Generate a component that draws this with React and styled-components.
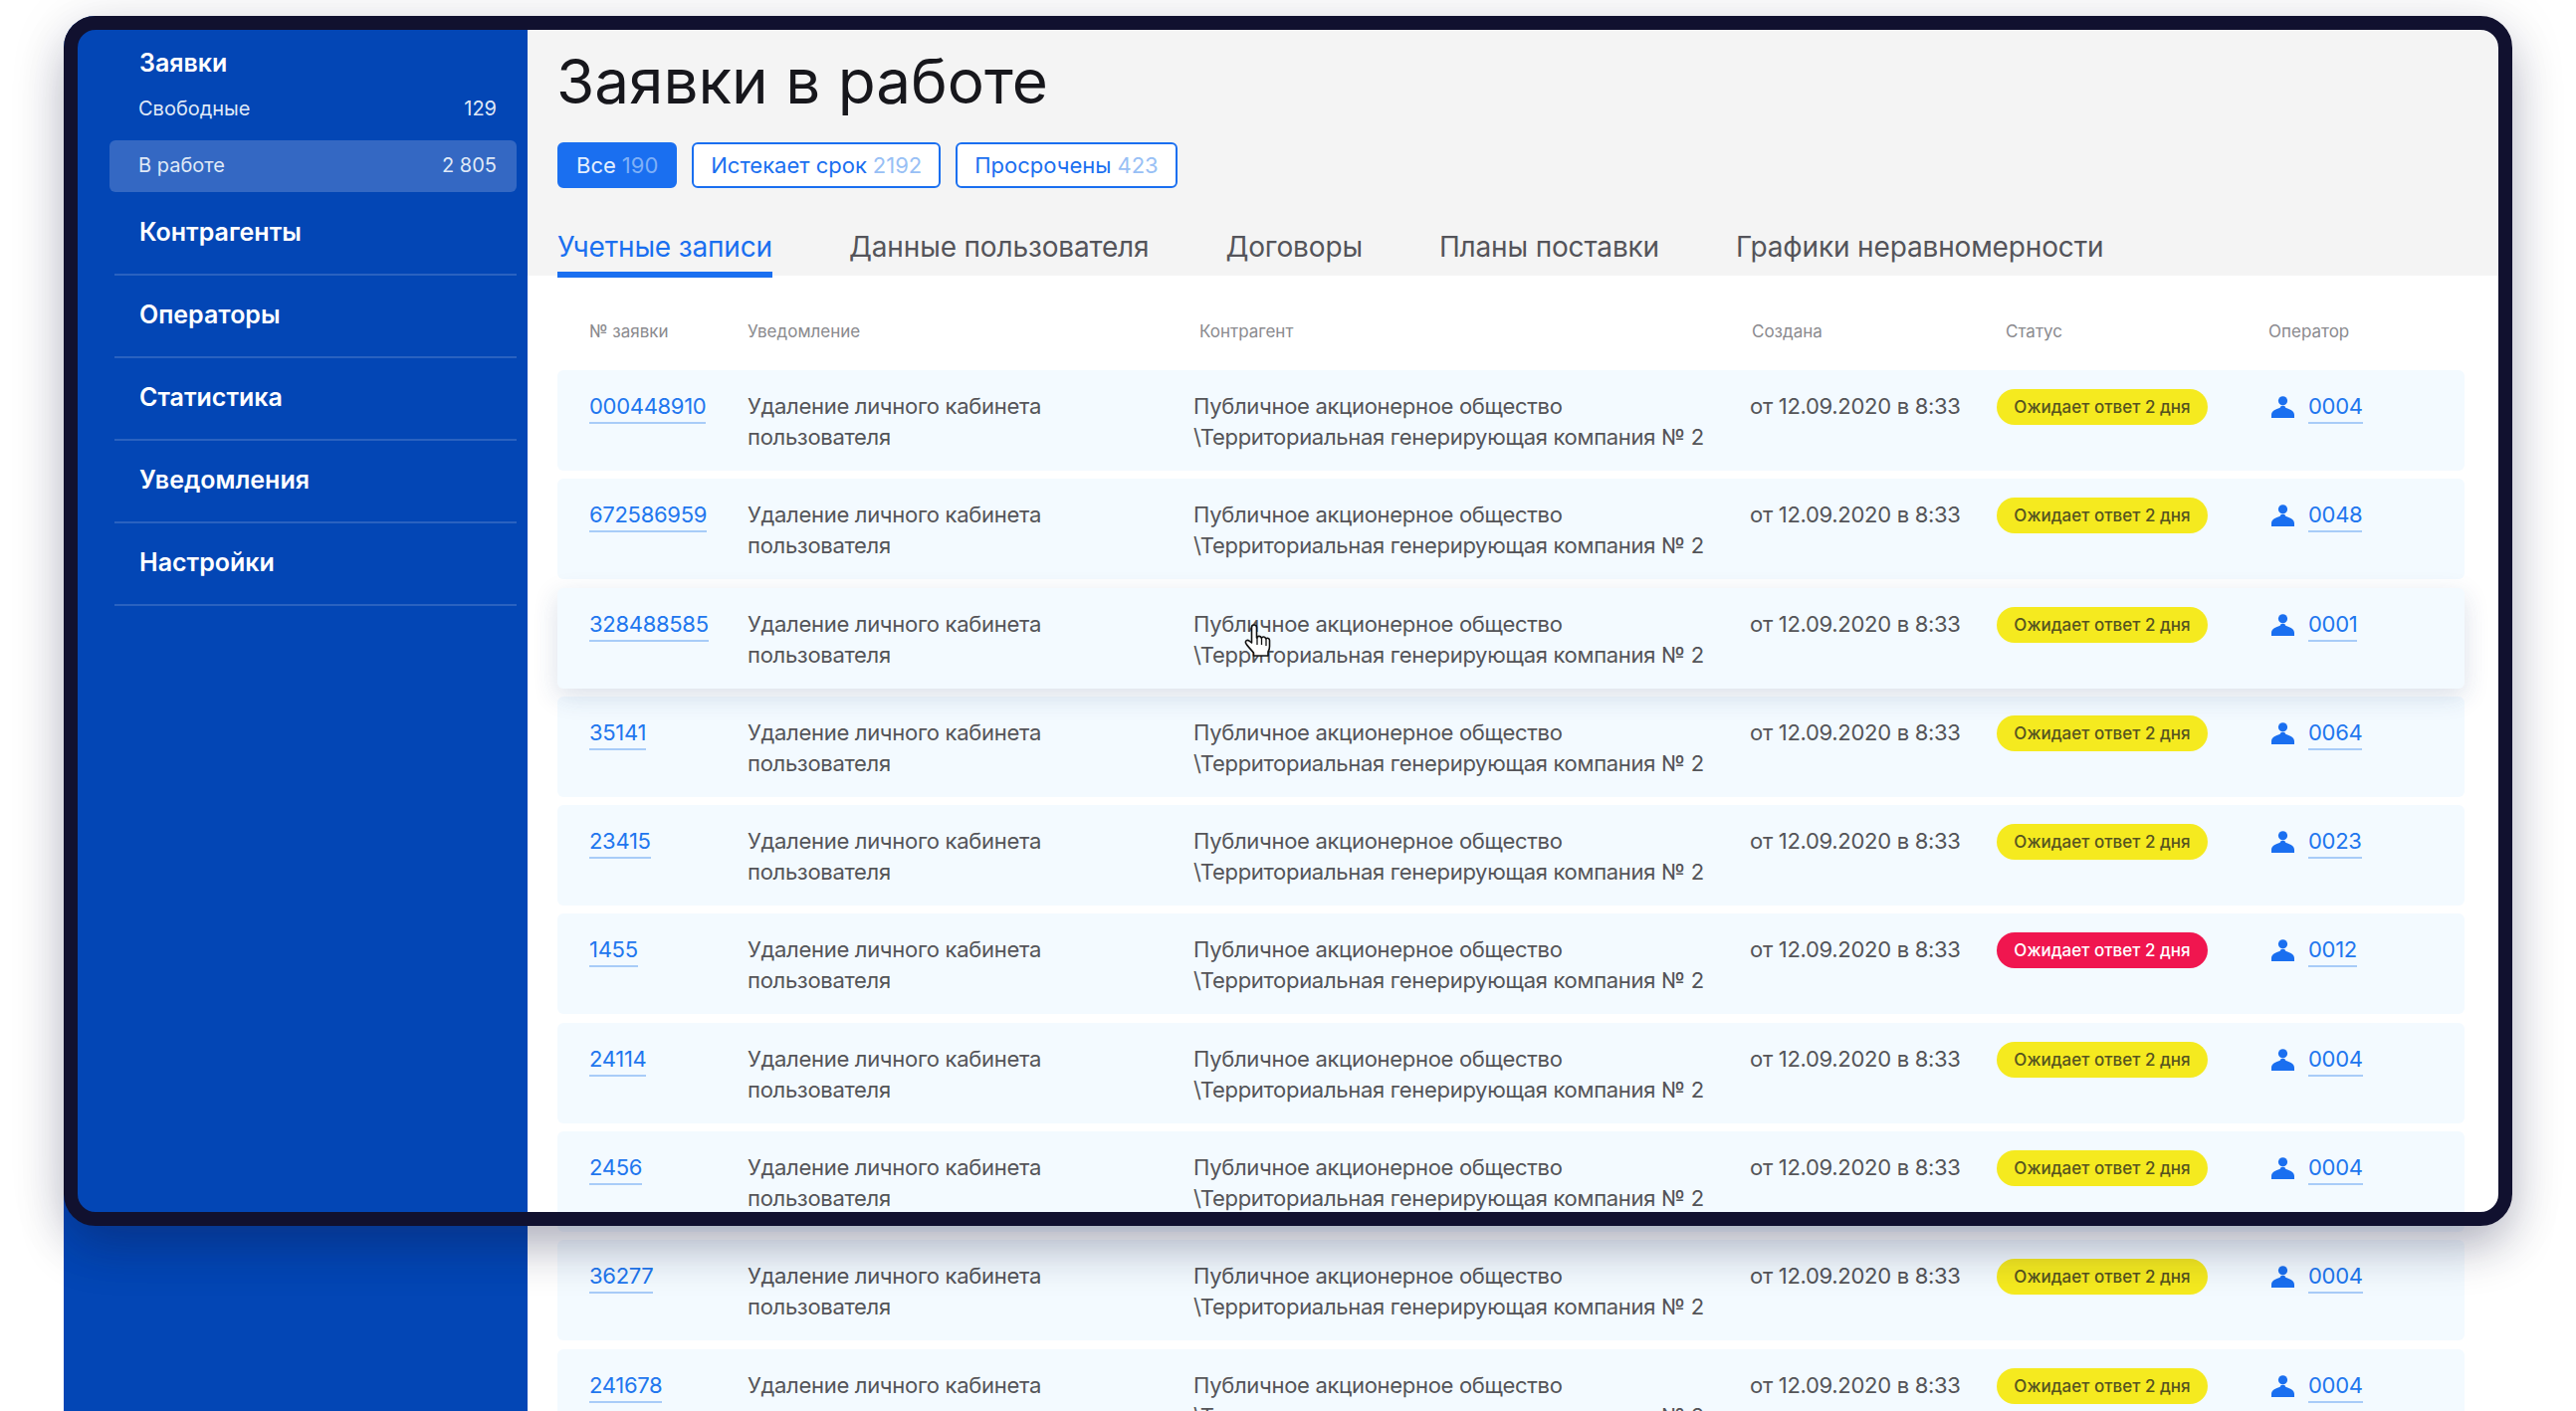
import React from 'react';
import styled, { createGlobalStyle } from 'styled-components';

const GlobalStyle = createGlobalStyle`
  html, body {
    margin: 0;
    height: 100%;
    overflow: hidden;
    background: #fff;
    font-family: 'Inter', 'Noto Sans', sans-serif;
  }
  * { box-sizing: border-box; }
`;

const Page = styled.div`
  height: 100vh;
  overflow: hidden;
  padding: 16px 64px 0;
`;

const Stage = styled.div`
  position: relative;
  height: 100%;
`;

const Screen = styled.div`
  display: flex;
  height: 100%;
  overflow: hidden;
  border-radius: 32px 32px 0 0;
  background: #fff;
`;

// device frame lying over the page, the page runs on below it
const Bezel = styled.div`
  position: absolute;
  top: 0;
  left: 0;
  right: 0;
  height: 1216px;
  border: 14px solid #11112f;
  border-radius: 32px;
  box-shadow: 0 24px 50px -6px rgba(20, 22, 60, 0.3), 0 6px 60px rgba(20, 22, 60, 0.1);
  pointer-events: none;
  z-index: 5;
`;

const Sidebar = styled.aside`
  flex: 0 0 466px;
  padding: 32px 11px 0 46px;
  background: #0346b5;
  color: #fff;
`;

const GroupTitle = styled.div`
  height: 30px;
  padding-left: 30px;
  font-size: 25px;
  line-height: 30px;
  font-weight: 600;
`;

const SubItem = styled.div`
  display: flex;
  justify-content: space-between;
  align-items: center;
  height: 52px;
  margin-top: ${(p) => (p.$first ? '6px' : '5px')};
  padding: 0 20px 2px 29px;
  border-radius: 6px;
  background: ${(p) => (p.$active ? '#3468c3' : 'transparent')};
  font-size: 20px;
  color: #dfe8f7;
`;

const NavList = styled.div`
  margin-top: 1px;
  padding-left: 5px;
`;

const NavItem = styled.div`
  display: flex;
  align-items: center;
  height: 83px;
  padding: 0 0 4px 25px;
  border-bottom: 2px solid #2a62c0;
  font-size: 25px;
  font-weight: 600;
`;

const Main = styled.main`
  position: relative;
  flex: 1;
  min-width: 0;
`;

const Header = styled.header`
  height: 261px;
  padding: 32px 48px 0 30px;
  background: #f4f4f4;
`;

const Title = styled.h1`
  margin: 0 0 0 -1px;
  font-size: 62px;
  line-height: 67px;
  font-weight: 400;
  color: #17171c;
`;

const Filters = styled.div`
  display: flex;
  gap: 15px;
  margin-top: 28px;
`;

const Filter = styled.div`
  display: flex;
  align-items: center;
  gap: 6px;
  height: 46px;
  padding: 0 17px;
  border: 2px solid #1a6ff0;
  border-radius: 6px;
  background: ${(p) => (p.$active ? '#1a6ff0' : '#fff')};
  color: ${(p) => (p.$active ? '#e4efff' : '#1a6ff0')};
  font-size: 22px;
`;

const FilterCount = styled.span`
  color: ${(p) => (p.$active ? '#7fb0f7' : '#98bff5')};
`;

const Tabs = styled.nav`
  display: flex;
  gap: 77px;
  margin-top: 26px;
`;

const Tab = styled.div`
  height: 64px;
  padding-top: 15px;
  border-bottom: 6px solid ${(p) => (p.$active ? '#1a6ff0' : 'transparent')};
  font-size: 28px;
  line-height: 36px;
  letter-spacing: -0.15px;
  color: ${(p) => (p.$active ? '#1a6ff0' : '#54545a')};
`;

const TableArea = styled.section`
  padding: 0 48px 0 30px;
`;

const TableHead = styled.div`
  display: grid;
  grid-template-columns: 159px 454px 555px 255px 264px 1fr;
  align-items: center;
  height: 95px;
  padding: 17px 0 0 32px;
  font-size: 17px;
  color: #8a8a8e;
`;

const Rows = styled.div`
  display: flex;
  flex-direction: column;
  gap: 8.3px;
`;

const Row = styled.div`
  position: relative;
  display: grid;
  grid-template-columns: 159px 448px 559px 248px 276px 1fr;
  flex: 0 0 101px;
  padding: 21px 0 0 32px;
  border-radius: 6px;
  background: #f3faff;
  font-size: 22px;
  line-height: 31px;
  letter-spacing: -0.3px;
  color: #545458;
  box-shadow: ${(p) => (p.$hover ? '0 8px 26px rgba(30, 60, 120, 0.16)' : 'none')};
  z-index: ${(p) => (p.$hover ? 1 : 0)};
`;

const Cell = styled.div`
  min-width: 0;
`;

const IdLink = styled.a`
  display: inline-block;
  border-bottom: 2px solid #a8ccf8;
  color: #2176ee;
`;

const Badge = styled.div`
  display: flex;
  align-items: center;
  justify-content: center;
  width: 212px;
  height: 36px;
  margin-top: -2px;
  padding-top: 1px;
  border-radius: 18px;
  background: ${(p) => (p.$danger ? '#f0164f' : '#f5ea1f')};
  color: ${(p) => (p.$danger ? '#fff' : '#55531f')};
  font-size: 17px;
  letter-spacing: 0;
  font-weight: 500;
`;

const OperatorCell = styled.div`
  display: flex;
  align-items: flex-start;
  gap: 14px;
`;

const PersonSvg = styled.svg`
  flex: none;
  width: 23px;
  height: 22px;
  margin-top: 5px;
  fill: #1a6ff0;
`;

const HandCursor = styled.svg`
  position: absolute;
  left: 720px;
  top: 610px;
  width: 28px;
  height: 36px;
  z-index: 3;
`;

const subItems = [
  { label: 'Свободные', count: '129' },
  { label: 'В работе', count: '2 805', active: true },
];

const navItems = ['Контрагенты', 'Операторы', 'Статистика', 'Уведомления', 'Настройки'];
const tabs = ['Учетные записи', 'Данные пользователя', 'Договоры', 'Планы поставки', 'Графики неравномерности'];

const rows = [
  { id: '000448910', op: '0004' },
  { id: '672586959', op: '0048' },
  { id: '328488585', op: '0001', hover: true },
  { id: '35141', op: '0064' },
  { id: '23415', op: '0023' },
  { id: '1455', op: '0012', danger: true },
  { id: '24114', op: '0004' },
  { id: '2456', op: '0004' },
  { id: '36277', op: '0004' },
  { id: '241678', op: '0004' },
];

function PersonIcon() {
  return (
    <PersonSvg viewBox="0 0 23 22">
      <circle cx="11.5" cy="4.8" r="4.6" />
      <path d="M0 22v-3c0-3.800 3.800-5.500 6.800-6.500 2-.6 2.700-1.500 2.700-2.500h4c0 1 .7 1.900 2.700 2.500 3 1 6.800 2.700 6.800 6.500v3z" />
    </PersonSvg>
  );
}

export default function App() {
  return (
    <Page>
      <GlobalStyle />
      <Stage>
        <Screen>
          <Sidebar>
            <GroupTitle>Заявки</GroupTitle>
            {subItems.map((item, i) => (
              <SubItem key={item.label} $first={i === 0} $active={item.active}>
                <span>{item.label}</span>
                <span>{item.count}</span>
              </SubItem>
            ))}
            <NavList>
              {navItems.map((item) => (
                <NavItem key={item}>{item}</NavItem>
              ))}
            </NavList>
          </Sidebar>

          <Main>
            <Header>
              <Title>Заявки в работе</Title>
              <Filters>
                <Filter $active>
                  Все <FilterCount $active>190</FilterCount>
                </Filter>
                <Filter>
                  Истекает срок <FilterCount>2192</FilterCount>
                </Filter>
                <Filter>
                  Просрочены <FilterCount>423</FilterCount>
                </Filter>
              </Filters>
              <Tabs>
                {tabs.map((tab, i) => (
                  <Tab key={tab} $active={i === 0}>{tab}</Tab>
                ))}
              </Tabs>
            </Header>

            <TableArea>
              <TableHead>
                <div>№ заявки</div>
                <div>Уведомление</div>
                <div>Контрагент</div>
                <div>Создана</div>
                <div>Статус</div>
                <div>Оператор</div>
              </TableHead>
              <Rows>
                {rows.map((row) => (
                  <Row key={row.id} $hover={row.hover}>
                    <Cell>
                      <IdLink>{row.id}</IdLink>
                    </Cell>
                    <Cell>Удаление личного кабинета<br />пользователя</Cell>
                    <Cell>Публичное акционерное общество<br />\Территориальная генерирующая компания № 2</Cell>
                    <Cell>от 12.09.2020 в 8:33</Cell>
                    <Cell>
                      <Badge $danger={row.danger}>Ожидает ответ 2 дня</Badge>
                    </Cell>
                    <OperatorCell>
                      <PersonIcon />
                      <IdLink>{row.op}</IdLink>
                    </OperatorCell>
                  </Row>
                ))}
              </Rows>
            </TableArea>

            <HandCursor viewBox="0 0 28 36">
              <path
                d="M10 2c1.500 0 2.500 1 2.500 2.500V15l.5-.3c0-1.500 3.500-2 4 0l.5.3c.5-1.500 3.500-1.500 4 .5l.5.3c1-1 3.500-.5 3.500 1.700v6c0 2.500-.5 4-1.500 5.500V33H9.500v-3C7 27 2 22 1.500 20c-.5-2 1.500-3.500 3.500-2l2.500 2V4.500C7.500 3 8.500 2 10 2z"
                fill="#fff"
                stroke="#111"
                strokeWidth="1.600"
                strokeLinejoin="round"
              />
              <path d="M13 15v7M17.500 15v7M22 16v7" stroke="#111" strokeWidth="1.300" fill="none" />
            </HandCursor>
          </Main>
        </Screen>
        <Bezel />
      </Stage>
    </Page>
  );
}
